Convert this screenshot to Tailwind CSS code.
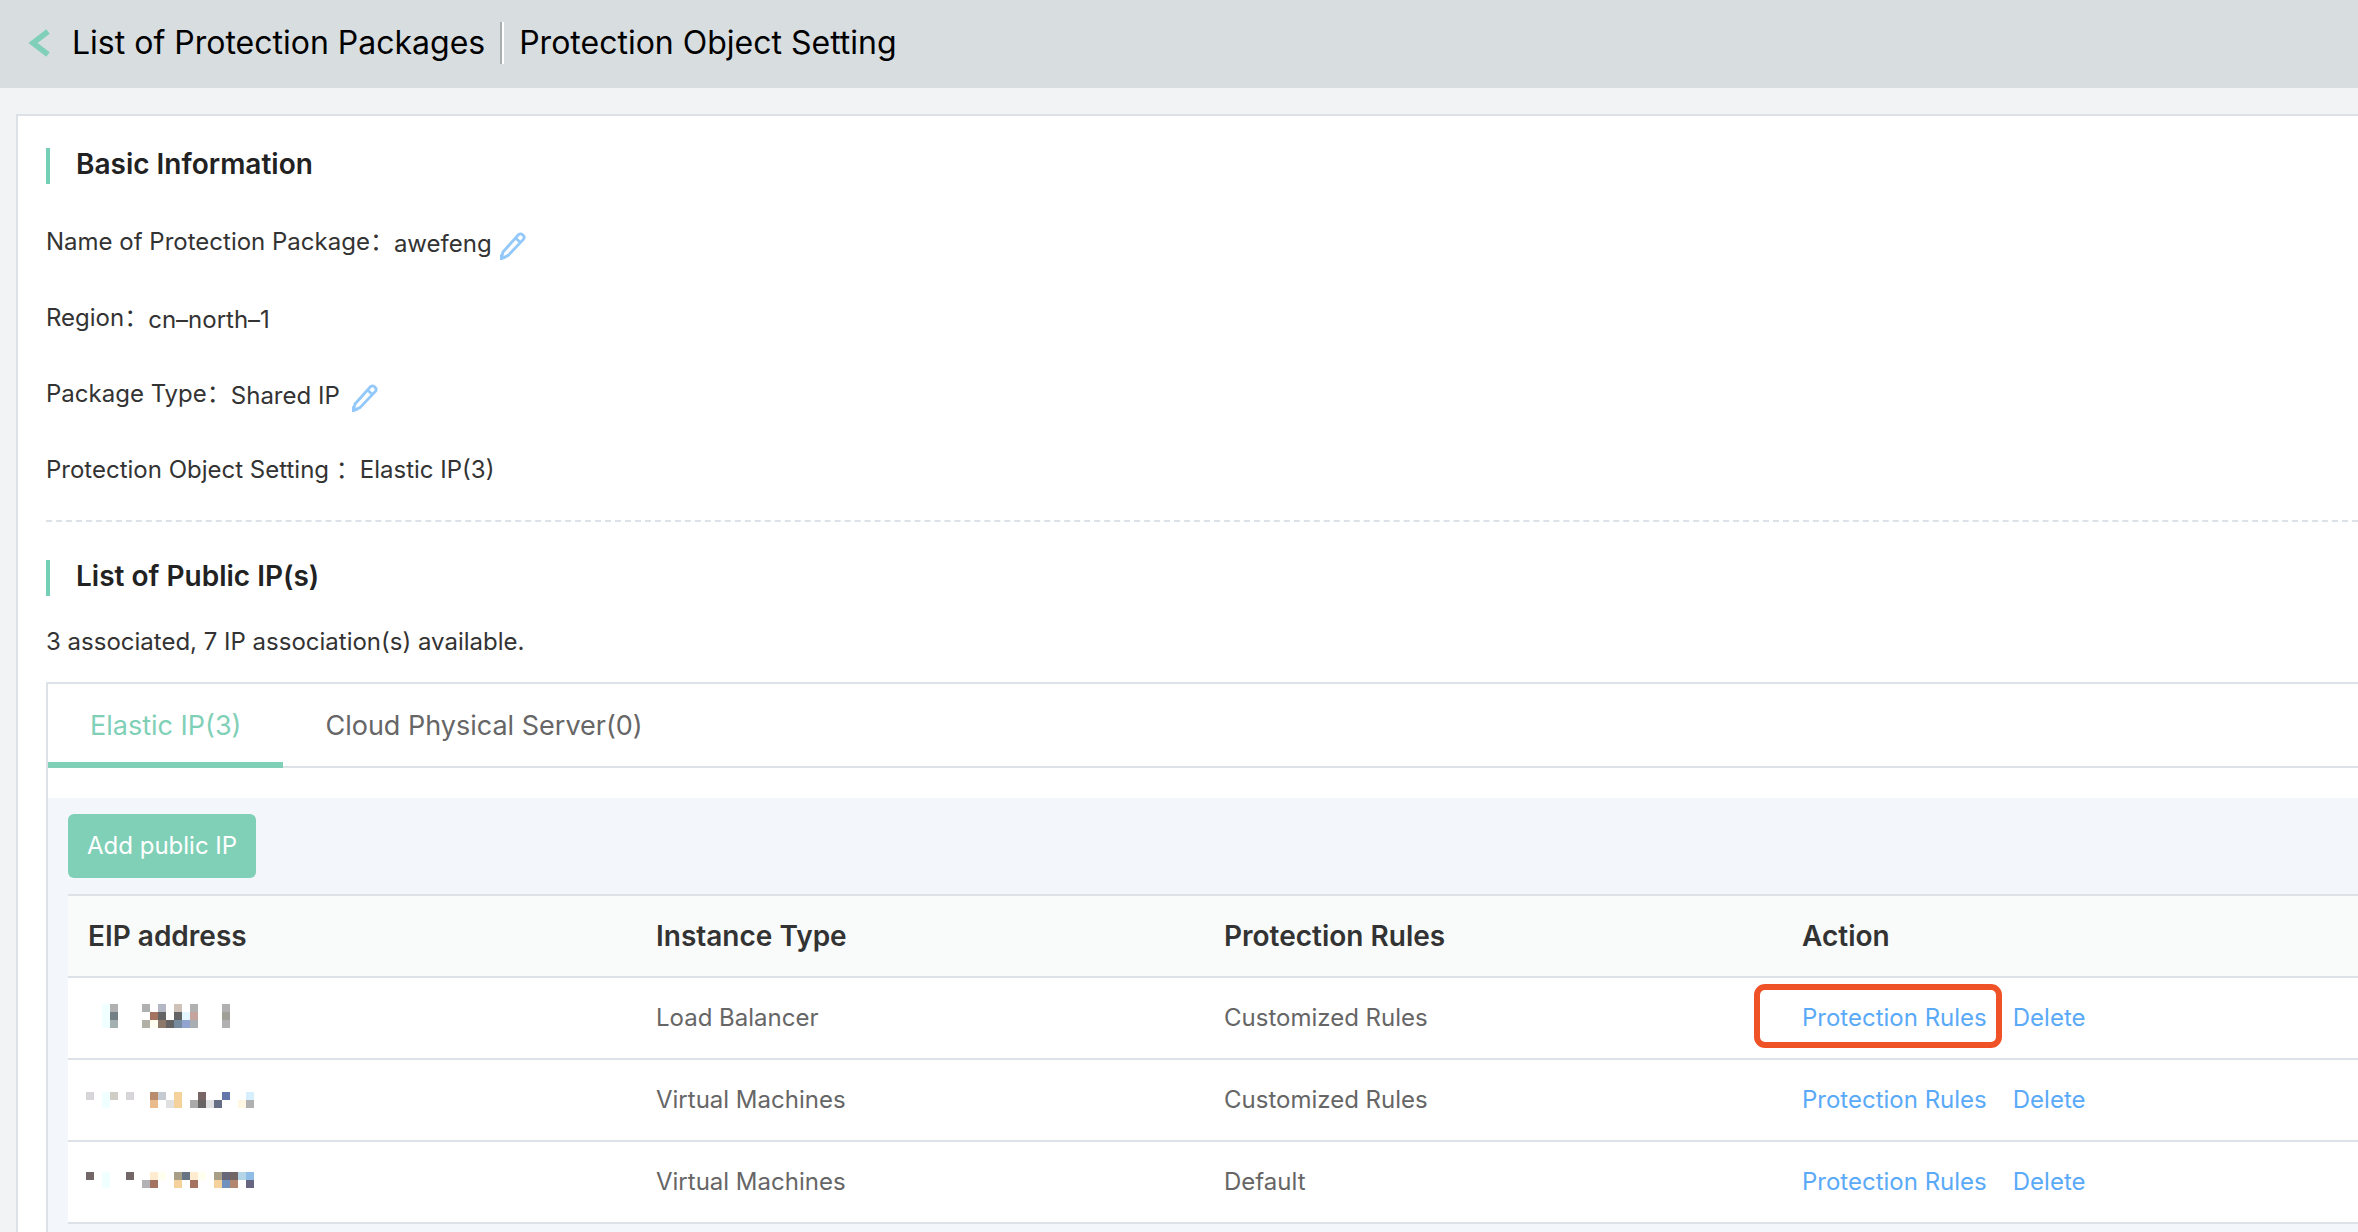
<!DOCTYPE html>
<html lang="en">
<head>
<meta charset="utf-8">
<meta name="viewport" content="width=device-width, initial-scale=1">
<title>Protection Object Setting</title>
<script src="https://cdn.jsdelivr.net/npm/@tailwindcss/browser@4"></script>
</head>
<body class="flex min-h-screen flex-col overflow-x-hidden bg-[#f2f3f5] font-['Inter','Noto_Sans_CJK_SC',sans-serif] text-[24px] leading-8 text-[#333]">

<header class="flex h-[88px] shrink-0 items-center bg-[#d8dde0] pb-0.5 pl-7 text-[32px] leading-10 text-black">
  <a href="#" class="flex items-center gap-[22px]" aria-label="Back to List of Protection Packages">
    <svg class="h-7 w-[22px]" viewBox="0 0 22 28" fill="none" stroke="#80d0b7" stroke-width="5.6" aria-hidden="true"><path d="M20 2.500 5 14l15 11.500"/></svg>
    <span>List of Protection Packages</span>
  </a>
  <span class="mx-[15px] h-[42px] w-1 border-l-2 border-[#a9aeb1] bg-white"></span>
  <h1>Protection Object Setting</h1>
</header>

<main class="mt-[26px] ml-4 grow border-t-2 border-l-2 border-[#dce2e7] bg-white pt-8 pl-7">
  <section>
    <h2 class="border-l-4 border-[#73cfb5] pb-1 pl-[26px] text-[28px] leading-8 font-semibold text-[#222]">Basic Information</h2>
    <dl class="mt-5 pb-3">
      <div class="flex h-[76px] items-center">
        <dt>Name of Protection Package：</dt>
        <dd class="flex items-center gap-2 pt-1">awefeng
          <button type="button" class="pt-1" aria-label="Edit name">
            <svg class="h-7 w-[26px]" viewBox="0 0 26 28" fill="none" stroke="#92c8fa" stroke-width="2.800" aria-hidden="true"><path d="M1.400 26.600 3 20 18.600 2.600q2-1.600 4 .2 2.600 2 1 4.400L8 23.600zM15.500 6l5.500 5"/><path d="M0 28v-6l6 4.500z" fill="#92c8fa" stroke="none"/></svg>
          </button>
        </dd>
      </div>
      <div class="flex h-[76px] items-center">
        <dt>Region：</dt>
        <dd class="pt-1">cn–north–1</dd>
      </div>
      <div class="flex h-[76px] items-center">
        <dt>Package Type：</dt>
        <dd class="flex items-center gap-3 pt-1">Shared IP
          <button type="button" class="pt-1" aria-label="Edit package type">
            <svg class="h-7 w-[26px]" viewBox="0 0 26 28" fill="none" stroke="#92c8fa" stroke-width="2.800" aria-hidden="true"><path d="M1.400 26.600 3 20 18.600 2.600q2-1.600 4 .2 2.600 2 1 4.400L8 23.600zM15.500 6l5.500 5"/><path d="M0 28v-6l6 4.500z" fill="#92c8fa" stroke="none"/></svg>
          </button>
        </dd>
      </div>
      <div class="flex h-[76px] items-center">
        <dt>Protection Object Setting ：</dt>
        <dd>Elastic IP(3)</dd>
      </div>
    </dl>
  </section>

  <section class="border-t-2 border-dashed border-[#dce2e7] pt-[38px]">
    <h2 class="border-l-4 border-[#73cfb5] pb-1 pl-[26px] text-[28px] leading-8 font-semibold text-[#222]">List of Public IP(s)</h2>
    <p class="mt-[30px] mb-6">3 associated, 7 IP association(s) available.</p>

    <div class="border-t-2 border-l-2 border-[#dce2e7]">
      <div role="tablist" class="flex h-[84px] border-b-2 border-[#dce2e7] text-[27px] leading-8 text-[#666]">
        <button type="button" role="tab" aria-selected="true" class="-mb-0.5 border-b-6 border-[#80d0b7] px-[42px] pt-1.5 text-[#80d0b7]">Elastic IP(3)</button>
        <button type="button" role="tab" aria-selected="false" class="px-[42px] pt-0.5">Cloud Physical Server(0)</button>
      </div>

      <div class="mt-[30px] bg-[#f3f7fc] pb-8 pl-5">
        <div class="py-4">
          <button type="button" class="h-16 rounded-md bg-[#80d0b7] px-[19px] text-white">Add public IP</button>
        </div>
        <table class="w-full table-fixed border-collapse text-left text-[#666]">
          <colgroup><col class="w-[568px]"><col class="w-[568px]"><col class="w-[578px]"><col></colgroup>
          <thead class="bg-[#f9fbfa] text-[28px] text-[#333]">
            <tr class="h-[82px] border-y-2 border-[#dce2e7]">
              <th scope="col" class="px-5 font-semibold">EIP address</th>
              <th scope="col" class="px-5 font-semibold">Instance Type</th>
              <th scope="col" class="px-5 font-semibold">Protection Rules</th>
              <th scope="col" class="px-5 font-semibold">Action</th>
            </tr>
          </thead>
          <tbody class="bg-white">
            <tr class="h-[82px] border-b-2 border-[#dce2e7]">
              <td class="pl-[18px]">
                <svg class="h-7 w-[168px]" viewBox="0 0 168 28" shape-rendering="crispEdges" role="img" aria-label="Hidden address">
                  <path fill="#f0ffff" d="M16 0h8v24h-8z"/>
                  <path fill="#b0b0b0" d="M24 0h8v8h-8zM56 0h8v8h-8zM104 0h8v8h-8zM136 0h8v24h-8z"/>
                  <path fill="#748086" d="M24 8h8v8h-8z"/><path fill="#a4b0b0" d="M24 16h8v8h-8z"/>
                  <path fill="#b3b8c4" d="M72 0h8v8h-8z"/><path fill="#cdc1b8" d="M88 0h8v8h-8z"/>
                  <path fill="#a57362" d="M64 8h8v8h-8z"/><path fill="#646464" d="M72 8h8v8h-8zM88 8h8v8h-8zM80 16h8v8h-8z"/>
                  <path fill="#e4f6ff" d="M96 8h8v8h-8z"/><path fill="#c5a49d" d="M104 8h8v8h-8z"/><path fill="#9f9f98" d="M136 8h8v8h-8z"/>
                  <path fill="#b2afa6" d="M56 16h8v8h-8z"/><path fill="#fffef0" d="M64 16h8v8h-8z"/><path fill="#8c796c" d="M72 16h8v8h-8z"/>
                  <path fill="#778b9e" d="M88 16h8v8h-8z"/><path fill="#90a4cf" d="M96 16h8v8h-8z"/><path fill="#a9aeb2" d="M104 16h8v8h-8z"/>
                </svg>
              </td>
              <td class="px-5">Load Balancer</td>
              <td class="px-5">Customized Rules</td>
              <td class="px-5 text-[#5aaaf8]">
                <div class="flex gap-[26px]">
                  <a href="#" class="relative">Protection Rules<span class="absolute -top-[18px] -right-[15px] -bottom-3.5 -left-12 rounded-[11px] border-6 border-[#f05228]"></span></a>
                  <a href="#">Delete</a>
                </div>
              </td>
            </tr>
            <tr class="h-[82px] border-b-2 border-[#dce2e7]">
              <td class="pl-[18px]">
                <svg class="h-4 w-[168px]" viewBox="0 0 168 16" shape-rendering="crispEdges" role="img" aria-label="Hidden address">
                  <path fill="#d7d4da" d="M0 0h8v8h-8zM40 0h8v8h-8z"/><path fill="#f0ffff" d="M16 0h8v16h-8z"/><path fill="#d0ccc6" d="M24 0h8v8h-8z"/>
                  <path fill="#b88c6c" d="M64 0h8v8h-8z"/><path fill="#e8ba8c" d="M64 8h8v8h-8z"/><path fill="#c6cad1" d="M72 0h8v8h-8z"/>
                  <path fill="#e0dfe1" d="M80 8h8v8h-8zM120 8h8v8h-8z"/><path fill="#f5d29c" d="M88 0h8v16h-8z"/><path fill="#aaa" d="M104 8h8v8h-8z"/>
                  <path fill="#786666" d="M112 0h8v8h-8z"/><path fill="#696464" d="M112 8h8v8h-8z"/><path fill="#666e86" d="M128 8h8v8h-8z"/>
                  <path fill="#6476aa" d="M136 0h8v8h-8z"/><path fill="#fff7e2" d="M152 8h8v8h-8z"/><path fill="#d6efff" d="M160 0h8v8h-8z"/><path fill="#b0b0b0" d="M160 8h8v8h-8z"/>
                </svg>
              </td>
              <td class="px-5">Virtual Machines</td>
              <td class="px-5">Customized Rules</td>
              <td class="px-5 text-[#5aaaf8]"><div class="flex gap-[26px]"><a href="#">Protection Rules</a><a href="#">Delete</a></div></td>
            </tr>
            <tr class="h-[82px] border-b-2 border-[#dce2e7]">
              <td class="pl-[18px]">
                <svg class="h-5 w-[168px]" viewBox="0 0 168 20" shape-rendering="crispEdges" role="img" aria-label="Hidden address">
                  <path fill="#736666" d="M0 0h8v8h-8zM40 0h8v8h-8zM144 0h8v8h-8z"/><path fill="#f0ffff" d="M16 0h8v16h-8z"/>
                  <path fill="#b2b2b6" d="M56 8h8v8h-8z"/><path fill="#ffecd0" d="M64 0h8v8h-8zM104 0h8v8h-8z"/><path fill="#a57362" d="M64 8h8v8h-8zM104 8h8v8h-8z"/>
                  <path fill="#fffff0" d="M72 0h8v8h-8zM112 0h8v8h-8z"/><path fill="#a89f86" d="M88 0h8v8h-8zM128 0h8v8h-8z"/><path fill="#f5d29c" d="M88 8h8v8h-8zM128 8h8v8h-8z"/>
                  <path fill="#667484" d="M96 0h8v8h-8z"/><path fill="#676779" d="M136 0h8v8h-8z"/><path fill="#7090bd" d="M136 8h8v8h-8z"/><path fill="#b3866f" d="M144 8h8v8h-8z"/>
                  <path fill="#b4d4e8" d="M152 0h8v8h-8z"/><path fill="#90bde6" d="M160 0h8v8h-8z"/><path fill="#666681" d="M160 8h8v8h-8z"/>
                </svg>
              </td>
              <td class="px-5">Virtual Machines</td>
              <td class="px-5">Default</td>
              <td class="px-5 text-[#5aaaf8]"><div class="flex gap-[26px]"><a href="#">Protection Rules</a><a href="#">Delete</a></div></td>
            </tr>
          </tbody>
        </table>
      </div>
    </div>
  </section>
</main>
</body>
</html>
